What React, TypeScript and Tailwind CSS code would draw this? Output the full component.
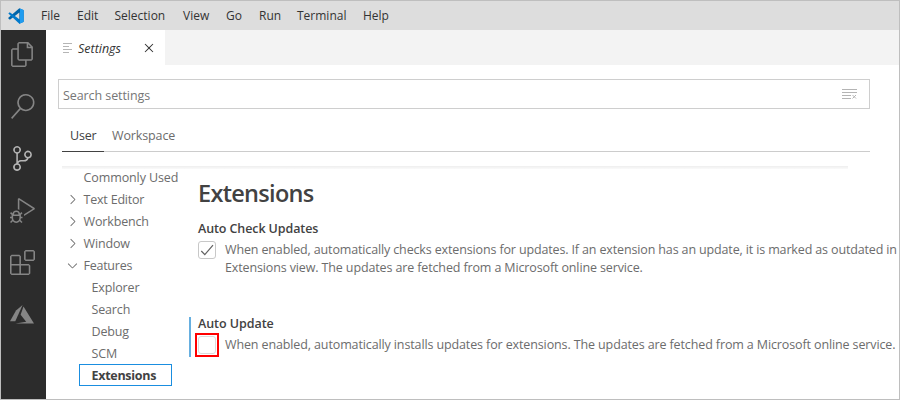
import React from "react";
import { VscFiles, VscSearch, VscSourceControl, VscDebugAlt, VscExtensions, VscChevronRight, VscChevronDown, VscClose } from "react-icons/vsc";

const menus = [
  { label: "File", cls: "w-[36px]" },
  { label: "Edit", cls: "w-[37.5px]" },
  { label: "Selection", cls: "w-[68.5px]" },
  { label: "View", cls: "w-[43px]" },
  { label: "Go", cls: "w-[33px]" },
  { label: "Run", cls: "w-[38px]" },
  { label: "Terminal", cls: "w-[66px]" },
  { label: "Help", cls: "w-[40px]" },
];

const groups = [
  { label: "Commonly Used", cls: "tracking-[-0.1px]", state: "none" },
  { label: "Text Editor", cls: "tracking-[-0.2px]", state: "closed" },
  { label: "Workbench", cls: "tracking-[-0.15px]", state: "closed" },
  { label: "Window", cls: "", state: "closed" },
  { label: "Features", cls: "tracking-[-0.25px]", state: "open" },
];

function VsLogo() {
  return (
    <svg className="h-[16px] w-[16px]" viewBox="0 0 100 100">
      <path d="M71 1 L98 14 V86 L71 99 V73 L71 28 L12 73 L2 65 V61 Z" fill="#0065a9" />
      <path d="M2 35 L11 27 L75 73 V98 L71 99 Z" fill="#007acc" />
      <path d="M71 1 L98 13 V87 L71 99 L75 96 V4 Z" fill="#1f9cf0" />
    </svg>
  );
}

function AzureLogo() {
  return (
    <svg className="h-[19px] w-[24px]" viewBox="0 0 24 19" fill="#858585">
      <path d="M12.6 0 L6 5.6 L0 16.3 H5.3 Z" />
      <path d="M13.5 1.5 L10.6 9.7 L16.2 16.7 L5.4 18.6 H24 Z" />
    </svg>
  );
}

function ClearIcon() {
  return (
    <svg className="mb-[2px] h-[11px] w-[15px]" viewBox="0 0 15 11" stroke="#b4b4b4" fill="none">
      <path d="M0 1.5 H15 M0 4.5 H15 M0 7.5 H9 M0 10.5 H9 M10.5 7 L14 10.5 M14 7 L10.5 10.5" />
    </svg>
  );
}

function CheckBox({ checked }: { checked?: boolean }) {
  return (
    <div className={`flex h-[18px] w-[18px] shrink-0 items-center justify-center rounded-[3px] border ${checked ? "border-[#c8c8c8]" : "border-[#dcdcdc]"}`}>
      {checked && (
        <svg className="h-4 w-4" viewBox="0 0 16 16" fill="none" stroke="#616161" strokeWidth="1.2">
          <path d="M2.3 9 L5.8 12.6 L14 3.2" />
        </svg>
      )}
    </div>
  );
}

export default function App() {
  return (
    <div className="flex h-[400px] w-[900px] flex-col overflow-hidden border border-[#bebebe] bg-white font-['Open_Sans','Noto_Sans',sans-serif] text-[12.5px] whitespace-nowrap text-[#6c6c6c]">
      <header className="flex h-[29px] shrink-0 items-center bg-[#dddddd] pl-[7px] text-[12px] text-[#333333]">
        <VsLogo />
        <nav className="ml-[17px] flex">
          {menus.map((m) => (
            <span key={m.label} className={m.cls}>{m.label}</span>
          ))}
        </nav>
      </header>
      <div className="flex min-h-0 flex-1">
        <aside className="flex w-[45px] shrink-0 flex-col items-center bg-[#2c2c2c] pr-[3px] text-[#858585]">
          <div className="flex h-[48px] items-center"><VscFiles size={25} /></div>
          <div className="flex h-[56px] items-center"><VscSearch size={25} /></div>
          <div className="flex h-[48px] items-center text-[#b5b5b5]"><VscSourceControl size={25} /></div>
          <div className="flex h-[56px] items-center"><VscDebugAlt size={25} /></div>
          <div className="flex h-[48px] items-center"><VscExtensions size={25} /></div>
          <div className="flex h-[56px] items-center"><AzureLogo /></div>
        </aside>
        <main className="flex min-w-0 flex-1 flex-col">
          <div className="flex h-[35px] shrink-0 bg-[#f3f3f3]">
            <div className="flex w-[119px] items-center bg-white pl-[17px] text-[#333333]">
              <svg className="mt-px h-[10px] w-[9px]" viewBox="0 0 9 10" stroke="#b5b5b5"><path d="M0 .5 H9 M0 3.5 H6 M0 6.5 H9 M0 9.5 H6" /></svg>
              <span className="ml-[6px] w-[63px] pt-[3px] text-[12.5px] italic">Settings</span>
              <VscClose size={16} />
            </div>
          </div>
          <div className="mt-[14px] ml-[12px] flex h-[30px] w-[812px] shrink-0 items-center justify-between border border-[#cecece] pr-[12px] pl-[4px] text-[#767676]">
            <span className="pt-[4px] tracking-[-0.08px]">Search settings</span>
            <ClearIcon />
          </div>
          <div className="mt-[12px] ml-[16px] flex h-[31px] w-[808px] shrink-0 border-b border-[#cccccc]">
            <div className="h-[31px] w-[42px] border-b border-[#424242] pl-[8px] leading-[29px] tracking-[-0.2px] text-[#424242]">User</div>
            <span className="pl-[8px] leading-[29px] tracking-[-0.12px]">Workspace</span>
          </div>
          <div className="mt-[14px] ml-[16px] h-[3px] w-[786px] shrink-0 bg-linear-to-b from-[#eeeeee] to-[#fafafa]" />
          <div className="flex min-h-0 flex-1">
            <nav className="w-[143px] shrink-0 tracking-[-0.15px]">
              <div className="-mt-[3px]">
                {groups.map((g) => (
                  <div key={g.label} className="flex h-[22px] items-center pl-[19px]">
                    <span className="w-[18.5px]">
                      {g.state === "closed" && <VscChevronRight size={15} />}
                      {g.state === "open" && <VscChevronDown size={15} />}
                    </span>
                    <span className={`pt-[2px] ${g.cls}`}>{g.label}</span>
                  </div>
                ))}
                <div className="flex h-[22px] items-center pt-[2px] pl-[45.5px]">Explorer</div>
                <div className="flex h-[22px] items-center pt-[2px] pl-[45.5px]">Search</div>
                <div className="flex h-[22px] items-center pt-[2px] pl-[45.5px]">Debug</div>
                <div className="flex h-[22px] items-center pt-[2px] pl-[45.5px]">SCM</div>
                <div className="ml-[33px] flex h-[22px] w-[93px] items-center border border-[#1a8ee0] pt-[2px] pl-[11.5px] font-bold tracking-[-0.28px] text-[#424242]">Extensions</div>
              </div>
            </nav>
            <section className="min-w-0 flex-1 tracking-[-0.13px]">
              <h1 className="mt-[7px] ml-[9px] h-[34px] text-[23.5px] leading-[34px] font-semibold tracking-[-0.7px] text-[#424242]">Extensions</h1>
              <div className="mt-[9px] ml-[9px]">
                <h2 className="h-[20px] text-[12.5px] leading-[20px] font-semibold tracking-[-0.1px] text-[#424242]">Auto Check Updates</h2>
                <div className="mt-[2px] flex h-[35px]">
                  <CheckBox checked />
                  <p className="ml-[9px] leading-[18px]">
                    <span className="tracking-[-0.14px]">When enabled, automatically checks extensions for updates. If an extension has an update, it is marked as outdated in</span><br />
                    Extensions view. The updates are fetched from a Microsoft online service.
                  </p>
                </div>
              </div>
              <div className="mt-[41px] flex h-[40px] border-l-2 border-[#66afe0] pl-[4px]">
                <div>
                  <h2 className="ml-[3px] h-[16px] text-[12.5px] leading-[13px] font-semibold tracking-[-0.05px] text-[#424242]">Auto Update</h2>
                  <div className="flex">
                    <div className="flex h-[24px] w-[24px] shrink-0 items-center justify-center border-2 border-[#ff0000]"><CheckBox /></div>
                    <p className="ml-[6px] leading-[23px] tracking-[-0.12px]">When enabled, automatically installs updates for extensions. The updates are fetched from a Microsoft online service.</p>
                  </div>
                </div>
              </div>
            </section>
          </div>
        </main>
      </div>
    </div>
  );
}
